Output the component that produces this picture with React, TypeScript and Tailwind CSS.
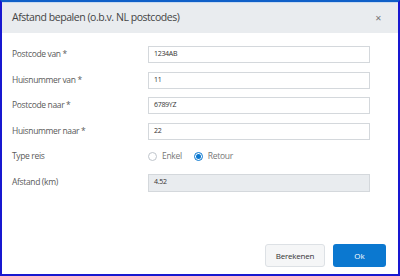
export default function App() {
  const rows = [
    { label: "Postcode van *", value: "1234AB" },
    { label: "Huisnummer van *", value: "11" },
    { label: "Postcode naar *", value: "6789YZ" },
    { label: "Huisnummer naar *", value: "22" },
  ];

  return (
    <div
      className="w-[400px] h-[276px] border-x-2 border-b-2 border-t-2 border-x-[#1818d0] border-b-[#1818d0] border-t-[#1060c8] bg-white flex flex-col overflow-hidden"
      style={{ fontFamily: '"Open Sans", "Noto Sans", sans-serif' }}
    >
      <div className="flex-1 flex flex-col border-t border-[#c8daf0]">
        <div className="h-[30px] bg-[#e9ecef] flex items-center justify-between pl-[10px] pr-[16px]">
          <span className="text-[10.5px] tracking-[-0.45px] text-[#444]">Afstand bepalen (o.b.v. NL postcodes)</span>
          <span className="text-[8px] text-[#777] leading-none">✕</span>
        </div>

        <div className="grid grid-cols-[136px_222px] gap-y-[8.5px] pl-[10px] pt-[13px]">
          {rows.map((r) => (
            <div key={r.label} className="contents">
              <div className="h-[17px] flex items-center text-[8.5px] tracking-[-0.35px] text-[#5a5a5a]">{r.label}</div>
              <div className="h-[17px] border border-[#d4d8dc] bg-white flex items-center pl-[5px] text-[7px] tracking-[-0.3px] text-[#333]">
                {r.value}
              </div>
            </div>
          ))}

          <div className="h-[17px] flex items-center text-[8.5px] tracking-[-0.35px] text-[#5a5a5a]">Type reis</div>
          <div className="h-[17px] flex items-center text-[8.5px] tracking-[-0.3px] text-[#777]">
            <span className="w-[9px] h-[9px] rounded-full border border-[#bfc5cc] bg-white" />
            <span className="ml-[5px]">Enkel</span>
            <span className="ml-[12px] w-[9px] h-[9px] rounded-full border border-[#0b78d0] bg-white flex items-center justify-center">
              <span className="w-[5px] h-[5px] rounded-full bg-[#0b78d0]" />
            </span>
            <span className="ml-[5px]">Retour</span>
          </div>

          <div className="h-[18px] flex items-center text-[8.5px] tracking-[-0.35px] text-[#5a5a5a]">Afstand (km)</div>
          <div className="h-[18px] border border-[#d4d8dc] bg-[#e9ecef] flex items-center pl-[5px] text-[7px] tracking-[-0.3px] text-[#333]">
            4.52
          </div>
        </div>

        <div className="flex-1" />

        <div className="flex justify-end gap-[8px] pr-[12px] pb-[7px]">
          <button className="w-[60px] h-[23px] rounded-[3px] border border-[#dde1e5] bg-[#f5f6f7] text-[8px] tracking-[-0.2px] text-[#333]">
            Berekenen
          </button>
          <button className="w-[53px] h-[23px] rounded-[3px] bg-[#0b78d0] text-[8px] text-white">
            Ok
          </button>
        </div>
      </div>
    </div>
  );
}
